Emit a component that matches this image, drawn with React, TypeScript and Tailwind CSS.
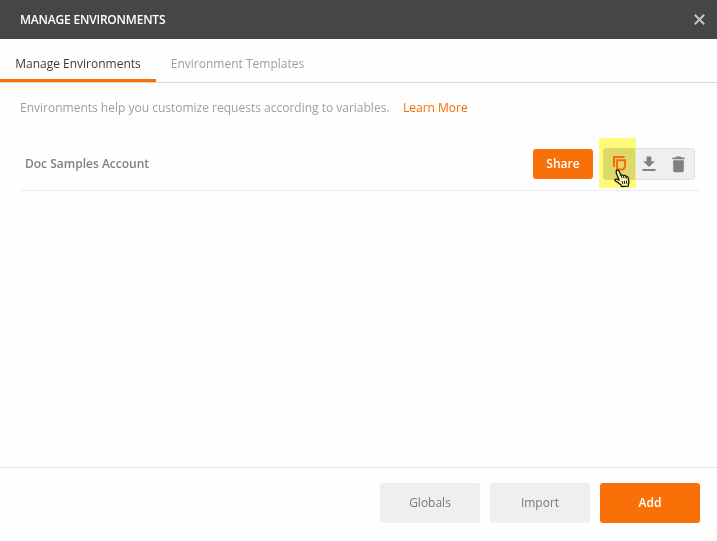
import type { ReactNode } from "react";

function CopyIcon() {
  return (
    <svg width="16" height="18" viewBox="0 0 16 18" fill="none" stroke="#f96b09" strokeWidth="2">
      <path d="M2 12V2H12.5" />
      <path d="M5 5.2H13V11.2Q12.8 13.4 10.6 14.6H5Z" />
    </svg>
  );
}

function DownloadIcon() {
  return (
    <svg width="14" height="16" viewBox="0 0 14 16" fill="#808080">
      <path d="M4.6 0.5H9.3V5.2H12.9L7 10.9L1.1 5.2H4.6Z" />
      <path d="M0.5 13H13.5V15H0.5Z" />
    </svg>
  );
}

function TrashIcon() {
  return (
    <svg width="13" height="17" viewBox="0 0 13 17" fill="#808080">
      <path d="M0.5 1.4H3.6L4.4 0.5H8.6L9.4 1.4H12.5V3.2H0.5Z" />
      <path d="M1.2 4.2H11.8V14.5Q11.8 16.3 10 16.3H3Q1.2 16.3 1.2 14.5Z" />
    </svg>
  );
}

function HandCursor() {
  return (
    <svg className="absolute left-[614px] top-[169px]" width="17" height="19" viewBox="0 0 17 19">
      <path
        d="M2.2 2.1C2.7 0.8 4.5 0.9 5 2.1L7 6.4C7.5 5.6 8.9 5.7 9.3 6.8C10.1 6 11.4 6.3 11.8 7.5C12.8 7 13.9 7.5 14.2 8.8L14.8 12.1C15 13.4 14.8 14.5 14.3 15.5V17.2L7.6 17.5L7 16C5.4 14.6 3.8 13.1 1.6 12.2C0.4 11.5 0.9 10.2 2.1 10.2C3.3 10.2 4.3 10.7 5.2 11.3L2.3 4Z"
        fill="#fffdb8"
        stroke="#171700"
        strokeWidth="1.3"
        strokeLinejoin="round"
      />
      <path
        d="M7 6.4L8 9.4M9.3 6.8L10.1 9.4M11.8 7.5L12.4 9.8M8 12L8.9 15M10.2 11.8L10.9 15M12.3 11.5L12.8 14.7"
        stroke="#171700"
        strokeWidth="1"
      />
    </svg>
  );
}

function FooterButton({ children, primary = false }: { children: ReactNode; primary?: boolean }) {
  return (
    <button
      className={`h-10 w-[100px] rounded-[3px] pb-px text-[12px] ${
        primary ? "bg-[#f97008] font-semibold text-white" : "bg-[#efefef] text-[#787878]"
      }`}
    >
      {children}
    </button>
  );
}

export default function App() {
  return (
    <div className="relative flex h-[541px] w-[717px] flex-col overflow-hidden bg-[#fefefe] font-['Open_Sans',sans-serif] text-[12px] leading-[18px]">
      <header className="flex h-[39px] shrink-0 items-center justify-between bg-[#464646] pl-5 pr-3">
        <h1 className="font-semibold tracking-[-0.2px] text-white">MANAGE ENVIRONMENTS</h1>
        <svg width="11" height="11" viewBox="0 0 11 11" stroke="#c4c4c4" strokeWidth="2">
          <path d="M0.8 0.8L10.2 10.2M10.2 0.8L0.8 10.2" />
        </svg>
      </header>

      <nav className="flex h-11 shrink-0 border-b border-[#d9d9d9]">
        <button className="h-[43px] w-[156px] border-b-[3px] border-[#f97008] pt-[9px] text-[#3c3c3c]">
          Manage Environments
        </button>
        <button className="h-[43px] w-[163px] pt-1.5 text-[#9e9e9e]">Environment Templates</button>
      </nav>

      <main className="grow pl-5 pr-[17px] pt-4">
        <p className="flex text-[#9e9e9e]">
          <span>Environments help you customize requests according to variables.</span>
          <a className="ml-[13.5px] text-[#f96a00]">Learn More</a>
        </p>
        <div className="mt-[21px] flex h-[53px] items-center border-b border-[#ebebeb] pl-[5px]">
          <span className="grow font-semibold text-[#808080]">Doc Samples Account</span>
          <button className="mr-2.5 h-[30px] w-[60px] rounded-[3px] bg-[#f97008] font-semibold text-white">
            Share
          </button>
          <div className="mr-[5px] flex h-8 w-[92px] items-center rounded-[3px] border border-[#dfdfdf] bg-[#efefef]">
            <span className="h-full w-[31px] bg-[#dcdcdc]" />
            <span className="flex w-7 justify-center"><DownloadIcon /></span>
            <span className="flex w-[31px] justify-center"><TrashIcon /></span>
          </div>
        </div>
      </main>

      <footer className="flex h-[74px] shrink-0 gap-2.5 border-t border-[#e8e8e8] pl-[380px] pt-[15px]">
        <FooterButton>Globals</FooterButton>
        <FooterButton>Import</FooterButton>
        <FooterButton primary>Add</FooterButton>
      </footer>

      <div className="absolute left-[599px] top-[138px] h-[50px] w-[37px] bg-[#fffc7b] mix-blend-multiply" />
      <div className="absolute left-[612px] top-[155px]"><CopyIcon /></div>
      <HandCursor />
    </div>
  );
}
